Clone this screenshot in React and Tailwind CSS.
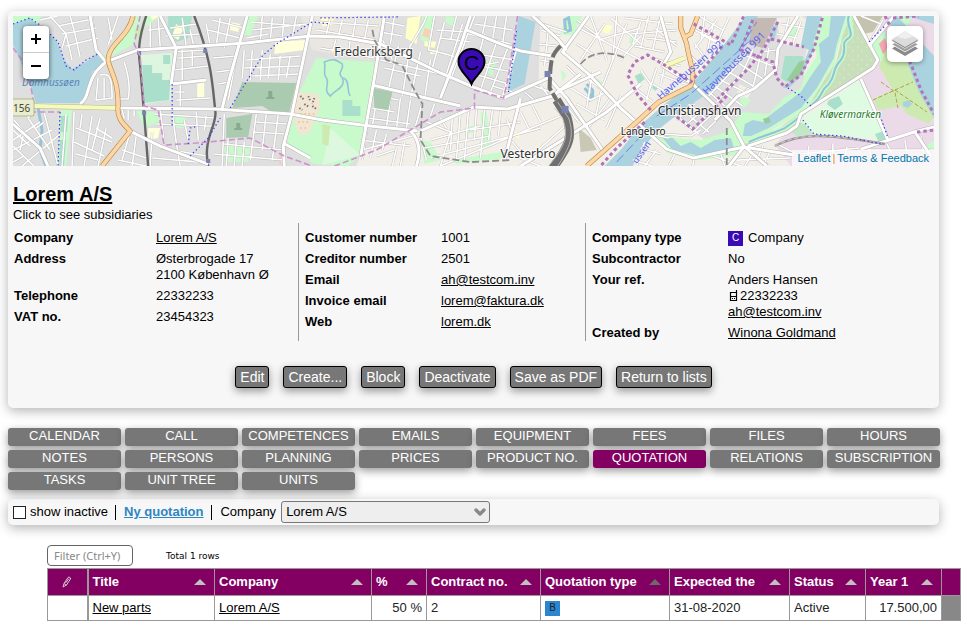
import { useState } from "react"
import { ChevronDown } from "lucide-react"

const TABS = [
    "CALENDAR", "CALL", "COMPETENCES", "EMAILS", "EQUIPMENT", "FEES", "FILES", "HOURS",
    "NOTES", "PERSONS", "PLANNING", "PRICES", "PRODUCT NO.", "QUOTATION", "RELATIONS", "SUBSCRIPTION",
    "TASKS", "UNIT TREE", "UNITS"
]

const ACTIONS = ["Edit", "Create...", "Block", "Deactivate", "Save as PDF", "Return to lists"]

const COLUMNS = [
    { name: "Title",          col: "w-[127px]" },
    { name: "Company",        col: "w-[157px]" },
    { name: "%",              col: "w-[55px]" },
    { name: "Contract no.",   col: "w-[114px]" },
    { name: "Quotation type", col: "w-[129px]", dark: true },
    { name: "Expected the",   col: "w-[120px]" },
    { name: "Status",         col: "w-[76px]" },
    { name: "Year 1",         col: "w-[76px]" }
]

// Side streets, only the white centre line
const STREETS = [
    "M50 16 L66 34 L62 48 M40 20 L58 16 M58 26 L92 19 M62 34 L96 28 M66 46 L98 38 M72 60 L66 34 M80 57 L74 30 L70 16 M92 16 L96 52",
    "M100 75 C110 72 112 78 112 98 L96 100 L98 78 M124 62 C130 80 130 90 128 99 L119 99 M104 78 L104 98 M108 18 L112 40 M118 16 L108 45",
    "M13 140 L40 122 M13 150 L52 130 M22 166 L60 134 M34 166 L13 146 M28 118 L50 150 M44 112 L58 166 M13 130 L30 146",
    "M66 114 L62 166 M74 112 L72 166 M76 128 L112 142 M74 142 L104 156 M82 114 L80 128 M92 116 L84 166 M100 118 L92 150 M106 128 L98 166 M112 138 L96 128 M76 154 L98 160",
    "M122 110 L124 118 M128 109 L128 120 M134 109 L134 116 M130 132 L122 160 M136 136 L132 166 M122 150 L146 158 M118 160 L146 166 M152 132 L150 166",
    "M150 22 L150 48 M158 18 L160 47 M170 28 L196 24 M166 36 L200 34 M182 18 L186 46 M190 30 L193 44 M148 30 L166 28",
    "M172 52 L206 50 M178 58 L206 56 M182 50 L182 80 M192 50 L192 66 M174 70 L208 66 M180 84 L180 106 M176 100 L210 98 M174 92 L184 92",
    "M154 114 L214 118 M160 110 L164 142 M172 112 L176 142 M184 120 L188 140 M196 112 L198 140 M206 116 L204 130 M156 124 L212 126 M160 148 L206 156 M176 142 L180 166 M152 158 L200 162",
    "M212 20 L244 28 M208 30 L240 38 M206 24 L210 46 M220 18 L216 46 M230 18 L224 48 M213 58 L236 56 M216 72 L232 70 M218 84 L229 82 M238 46 L228 100",
    "M250 22 L300 26 M252 30 L306 24 M262 16 L260 42 M272 18 L270 41 M284 16 L282 38 M296 16 L292 38 M246 38 L268 34",
    "M244 50 L242 78 M252 50 L250 80 M246 60 L300 56 M244 68 L300 66 M252 76 L298 74 M262 50 L260 80 M270 54 L268 78 M280 56 L278 80 M290 56 L286 78",
    "M224 114 L222 166 M256 114 L250 160 M266 114 L262 150 M278 114 L272 160 M256 122 L286 124 M254 132 L284 134 M224 144 L284 150 M228 138 L226 166 M236 140 L234 166 M244 142 L242 166 M214 154 L284 160",
    "M318 22 L378 26 M316 30 L376 40 M330 18 L326 34 M342 20 L338 36 M356 16 L352 38 M368 20 L364 40 M320 48 L374 58 M336 38 L332 52 M350 40 L348 54",
    "M384 22 L404 26 M380 32 L402 36 M382 40 L392 60 M398 46 L386 98 M384 68 L420 76 M380 60 L440 74 M394 16 L390 44 M410 44 L402 96 M420 52 L410 98 M430 60 L424 100",
    "M410 46 L424 22 L426 16 M434 16 L428 50 L446 54 M444 22 L432 68 M436 30 L466 32 M440 38 L470 42 M456 16 L450 40 M462 24 L446 74 M430 50 L460 58",
    "M464 44 L440 98 M474 16 L450 80 M484 34 L470 86 M496 42 L480 90 M508 46 L490 92 M516 50 L502 96 M470 64 L512 72 M476 54 L514 60 M474 74 L508 84",
    "M486 16 L482 34 M496 16 L492 40 M506 16 L502 44 M474 24 L512 30 M468 34 L510 44 M480 66 L498 62 M492 86 L512 92",
    "M370 94 L398 100 M372 108 L394 112 M378 88 L372 126 M390 98 L386 128 M368 118 L410 124 M400 98 L396 130 M410 100 L406 128 M422 102 L414 130 M434 104 L430 116",
    "M366 132 L362 160 M376 130 L370 158 M386 134 L382 150 M360 140 L410 146 M362 150 L412 136 M396 148 L392 166 M404 142 L400 166 M376 156 L394 150",
    "M420 136 L426 160 M426 122 L450 132 L440 166 M440 118 L446 128 M452 114 L450 150 M460 110 L456 160 M468 110 L464 160 M476 108 L474 140 M484 110 L480 158 M492 110 L488 140 M500 110 L498 136",
    "M430 158 L540 128 M440 166 L560 116 M424 148 L490 136 M470 130 L520 122 M430 140 L480 126 M500 150 L540 166 M510 140 L524 156 M506 118 L512 134 M520 112 L528 128 M532 106 L540 122 M520 166 L564 126",
    "M540 30 L560 36 M538 44 L556 46 M540 60 L550 62 M528 84 L550 92 M524 92 L536 102 M540 86 L548 96 M548 26 L544 66 M542 24 L566 32",
    "M576 20 L600 38 M590 16 L606 60 M604 24 L580 60 M576 44 L598 58 M610 18 L640 44 M598 40 L640 28 M616 16 L612 60 M626 24 L602 86 M640 36 L620 60 M578 28 L640 60",
    "M566 66 L582 82 M570 88 L590 100 L606 92 M586 78 L610 96 M592 72 L586 108 M602 84 L594 122 M610 98 L586 130 M576 104 L604 120 M620 96 L606 128 M566 106 L578 122",
    "M624 18 L672 24 M630 34 L676 30 M634 46 L664 52 M648 16 L640 48 M654 28 L676 46 M660 16 L652 50 M646 38 L676 42 M640 22 L632 44 M650 58 L680 66 M658 74 L684 84",
    "M698 16 L722 30 M704 16 L700 42 M716 20 L694 48 M690 28 L718 42 M694 44 L706 60 M700 34 L722 46 M712 26 L706 54 M728 18 L716 44 M690 56 L700 66",
    "M640 70 L650 84 L646 100 M652 84 L672 96 M656 68 L648 92 M664 66 L660 84 M634 88 L652 102",
    "M672 112 L698 134 M680 108 L708 132 M688 104 L704 118 M676 120 L694 104 M684 126 L702 110 M692 132 L714 112 M702 134 L722 114",
    "M708 92 L736 116 M714 86 L742 106 M708 96 L736 66 M716 102 L744 70 M724 108 L748 88 M720 80 L744 92 M728 72 L756 88 M736 62 L764 80 M746 56 L772 66 M752 50 L742 72 M760 54 L752 88",
    "M760 52 L776 50 M768 48 L764 76 M776 34 L796 38 M780 24 L802 28 M788 18 L782 44 M800 22 L792 44",
    "M662 134 L690 136 L700 130 M648 134 L668 138 M640 148 L660 154 M632 160 L652 166 M644 142 L636 166 M656 150 L644 166 M674 154 L668 166",
    "M693 160 L692 166 M712 156 L740 166 M720 154 L724 166 M748 148 L768 166 M754 150 L744 166 M762 146 L756 160 M770 150 L762 166 M736 160 L790 158 M776 144 L796 154",
    "M808 146 L806 166 M832 144 L832 166 M846 147 L842 166 M868 148 L872 166 M800 154 L858 148 M886 144 L898 166 M904 140 L908 166 M862 150 L933 150 M920 136 L924 160",
    "M860 16 L880 24 M882 20 L868 44 M13 162 L24 156 M14 120 L24 132 L20 150 M36 128 L44 122"
]

const MAIN_ROADS = [
    "M90 16 L96 50 L106 62",
    "M80 104 C92 96 84 78 106 62 L138 50 L200 46 L246 43 L310 36 L340 37 L380 44 L440 73 L470 86 L503 98 L550 77",
    "M118 108 L215 109 L290 114 L322 120 L370 126 L417 131",
    "M247 16 L230 76 L222 108 M160 16 L176 48 L171 84 L206 80",
    "M312 16 L292 112 L283 146 L284 166 M283 143 L310 158",
    "M13 124 L40 148 L48 166 M34 106 L28 118",
    "M130 131 L160 146 L208 164",
    "M384 16 L374 78 L360 158 M372 85 L430 99 L460 106",
    "M420 131 L473 107 L507 109 L552 96 L580 74 M410 131 C420 140 420 154 416 166",
    "M466 30 L500 44 L520 51 L552 56 M470 16 L460 46 L440 98 M520 98 L504 160",
    "M532 16 L558 40 L566 50 M588 16 L562 52 L590 76 L620 108 L666 149 L693 158 L743 147 L793 155",
    "M548 78 L566 98 L602 150 M552 96 L560 90 L600 72",
    "M520 166 L546 150 L606 112 L640 84",
    "M660 16 L670 52 L662 66 L692 84 L730 121 L743 146 L766 166 M743 147 L728 166",
    "M797 16 L777 49 L775 70 L753 89 L737 96 L714 120",
    "M853 16 L877 60 L872 68 L800 114 L796 126 L786 133 L747 146",
    "M860 79 L887 140 M893 16 L868 46 M860 149 L913 132 L933 127 M914 132 L930 156"
]

const ORANGE_ROADS = [
    "M133 16 C128 38 108 44 108 60 C110 72 118 78 118 106 C116 120 126 126 130 131 L102 166",
    "M586 166 L636 122 L658 102 L690 86 C696 76 688 60 686 44 L680 28 L680 16 M683 38 L690 34 L697 16"
]

const BOUNDARIES = [
    "M13 48 L22 60 L30 82 L34 104 M30 112 L60 112",
    "M140 16 L134 44 L140 56 L144 106 L158 110 L164 145 L196 143 L250 138 L284 156 L312 166",
    "M334 166 L376 150 L420 124 L440 112 L474 108 L474 90 L503 98 L508 76 L517 16"
]

const BROAD_BOUNDARIES = [
    "M650 110 L637 95 L627 75 L634 62 L647 55 L670 69 L690 82 L722 46",
    "M693 24 L730 45 L743 16",
    "M777 22 L763 49 L747 69 L717 99 M726 96 L692 129 L675 116",
    "M752 20 L740 50 L772 62 L776 78 L784 87 L800 75 L813 49 L822 16 M770 39 L803 47",
    "M884 16 L896 40 L910 64 L920 90 L933 114 M892 18 L918 16",
    "M644 122 L614 150 L600 166 M916 132 L933 130"
]

const RAILWAYS = [
    "M146 16 C138 40 138 52 140 66 L144 114 L148 166",
    "M194 16 C212 62 212 84 215 110 C218 124 202 138 208 166"
]

const FOOTPATHS = [
    "M13 24 L30 18 L44 28 L58 42 L66 66 L74 70 L86 60 L98 54",
    "M60 112 L58 166 M172 84 L172 128 M190 156 L208 138 L220 118 M188 144 L190 128 L198 126",
    "M230 108 L262 56 L276 44 L312 22 L330 24 M320 18 L400 17 M508 92 L516 30",
    "M787 88 L800 96 L811 107 M802 120 L813 134 L842 136 L880 144 M868 42 L884 26 M878 112 L887 138"
]

function CityMap() {
    return (
        <svg
            viewBox="13 16 920 150"
            preserveAspectRatio="xMidYMid slice"
            className="block h-full w-full"
            aria-label="Map of Copenhagen"
            role="img"
        >
            <defs>
                <pattern id="trees" width="9" height="9" patternUnits="userSpaceOnUse">
                    <circle cx="2" cy="2" r="0.8" fill="#e8e8c8" />
                    <circle cx="6" cy="6" r="0.8" fill="#e8e8c8" />
                </pattern>
            </defs>

            {/* Land */}
            <rect x="13" y="16" width="920" height="150" fill="#dfdfdf" />
            <path d="M13 16 L42 16 L34 28 L13 24 Z M144 16 L160 16 L146 28 Z M134 16 L142 16 L134 44 L108 58 L104 54 L122 38 Z" fill="#c8facc" />
            <path d="M540 16 H933 V166 H356 L362 150 L416 132 L473 108 L507 110 L552 96 L538 84 Z" fill="#f2efe9" />
            <path d="M300 16 L384 16 L370 60 L312 50 Z" fill="#eae7e3" />

            {/* Parks and green areas */}
            <path d="M316 58 L374 62 L372 80 L360 155 L348 166 L314 164 L286 146 L292 118 L300 90 Z" fill="#c8facc" />
            <path d="M330 128 L360 155 L322 165 Z" fill="#ddf8df" />
            <path d="M140 55 L172 53 L171 100 L144 104 Z" fill="#def6df" />
            <path d="M142 65 L152 65 L152 73 L162 73 L162 80 L170 80 L169 100 L144 103 Z M163 55 L170 55 L170 64 L163 64 Z" fill="#aae0cb" />
            <path d="M168 16 L192 16 L188 38 L176 42 L168 28 Z" fill="#aae0cb" />
            <path d="M176 24 L184 28 L178 40 L172 36 Z M150 16 L160 16 L152 20 Z M275 42 L305 40 L304 50 L274 54 Z M230 22 L240 24 L238 32 L230 30 Z M197 84 L204 82 L204 98 L197 98 Z M148 128 L160 128 L158 138 L148 140 Z" fill="#ffffdc" />
            <path d="M249 16 L258 16 L250 36 L243 34 Z M61 110 L72 110 L66 166 L58 166 Z M172 114 L186 116 L184 128 L174 128 Z M224 146 L250 146 L248 162 L226 162 Z M136 110 L158 112 L160 122 L144 128 Z" fill="#c8facc" />
            <path d="M61 116 L68 116 L67 132 L60 132 Z M60 140 L66 140 L64 166 L59 166 Z" fill="#aae0cb" />
            <path d="M298 92 L318 94 L320 106 L316 116 L310 132 L300 136 L294 122 L292 114 Z" fill="#f1e5d3" />
            <path d="M300 96 l4 4 M308 96 l2 5 M314 98 l-2 6 M304 104 l5 3 M312 106 l4 3 M299 108 l3 2" stroke="#777" strokeWidth="2" strokeDasharray="1.5 1.5" />
            <path d="M298 122 h12 M300 128 h8 M300 114 h14" stroke="#f3c186" strokeWidth="2" strokeDasharray="1.2 3" />
            <path d="M407 18 L420 16 L416 44 L405 38 Z M424 40 L436 42 L434 48 L424 46 Z M429 50 L440 52 L438 54 L430 54 Z M320 18 L334 18 L330 26 L322 26 Z M602 24 L612 26 L608 34 L602 32 Z M514 132 L520 134 L518 138 L513 136 Z" fill="#ffffc8" />
            <path d="M422 16 L434 16 L428 42 L420 40 Z" fill="#c8facc" />
            <path d="M424 28 L430 30 L428 38 L422 36 Z" fill="#facfb6" />
            <path d="M566 16 L582 16 L572 36 L560 34 Z M446 16 L458 18 L452 26 L444 22 Z M484 62 L496 60 L492 76 L486 72 Z M420 140 L430 142 L440 160 L424 164 Z M480 112 L486 112 L492 146 L482 150 Z M452 160 L500 152 L504 158 L456 164 Z M630 36 L636 38 L632 46 L628 42 Z M596 78 L602 82 L596 90 Z M560 70 L566 74 L562 82 Z M464 128 L478 124 L476 132 L466 134 Z" fill="#c8facc" />
            <path d="M342 100 h10 v6 h8 v10 h-18 z M634 76 l6 -3 l4 6 l-6 5 z M654 84 l4 3 l-3 4 l-4 -3 z" fill="#aae0cb" />
            <path d="M322 124 L330 126 L328 146 L322 144 Z M134 30 L144 26 L140 42 Z" fill="#cdebb0" />
            <path d="M578 128 L590 138 L596 150 L580 152 Z" fill="#c8c8b4" />
            <path d="M278 158 L284 148 L280 166 Z" fill="#f6c6c0" />

            {/* Christianshavn and Amager */}
            <path d="M757 16 H812 L802 70 L806 90 L776 116 L740 136 L704 140 L672 116 L707 92 L737 58 Z" fill="#dfdfdf" />
            <path d="M776 18 L800 16 L808 20 L800 46 L780 44 Z M738 84 L752 90 L746 100 L736 96 Z M668 122 L682 134 L664 136 L656 130 Z" fill="#f2efe9" />
            <path d="M742 96 l8 4 l-6 8 l-6 -4 z M786 24 l12 4 l-4 12 l-10 -4 z" fill="#c8facc" />
            <path d="M846 16 L853 16 L877 60 L872 68 L800 114 L796 126 L784 134 L748 146 L733 148 L770 134 L806 108 L836 60 Z" fill="#c8dfbb" />
            <path d="M846 16 L853 16 L877 60 L868 68 L826 92 L838 60 Z" fill="url(#trees)" />
            <path d="M853 16 L882 16 L872 32 L862 34 Z" fill="#c5c3ae" />
            <path d="M884 16 L933 16 V136 L888 142 L860 80 L876 62 L868 44 Z M774 144 L790 130 L814 134 L842 138 L888 142 L933 130 V166 H790 Z" fill="#ebdbe8" />
            <path d="M800 120 L858 80 L887 139 L842 136 L813 134 Z" fill="#dffce2" />
            <path d="M828 100 L838 96 L842 104 L834 110 L826 104 Z M874 134 L886 130 L888 140 L878 142 Z" fill="#aae0cb" />
            <path d="M798 122 L804 124 L812 134 L796 136 L790 132 Z" fill="#c0e8c4" />
            <path d="M868 44 L884 32 L888 44 L884 60 L876 62 Z M893 16 L912 16 L906 26 L892 30 Z M933 140 L933 150 L918 152 Z" fill="#c8facc" />
            <path d="M878 44 l6 -6 l4 12 l-6 4 z" fill="#f7a7b4" />
            <path d="M886 48 L908 62 L920 92 L933 116 L928 124 L906 114 L900 106 L878 110 L872 99 L892 90 L878 66 Z" fill="#cdebb0" />
            <path d="M872 100 L894 90 L912 82 M880 82 L894 92 L897 108 M894 90 L926 112" fill="none" stroke="#b0953c" strokeWidth="0.9" strokeDasharray="4 2" />

            {/* Water */}
            <path d="M13 24 L30 18 L42 28 L56 40 L64 60 L72 69 L86 62 L96 54 L104 62 L92 72 L90 88 L82 103 L36 103 L30 84 L13 44 Z" fill="#aad3df" />
            <path d="M745 16 H757 L752 34 L737 58 L707 93 L680 112 L657 130 L637 155 L632 166 H604 L620 150 L640 125 L663 105 L693 82 L720 49 Z" fill="#aad3df" />
            <path d="M753 18 L776 18 L762 48 L748 44 Z" fill="#c5b9b4" />
            <path d="M806 16 H821 L814 48 L802 74 L788 88 L782 88 L800 70 L808 50 L800 46 Z M770 28 l8 -6 l-4 16 l-6 6 z" fill="#aad3df" />
            <path d="M821 16 H850 L838 44 L834 62 L816 92 L802 112 L768 132 L746 142 L733 156 L700 160 L668 154 L652 138 L660 132 L676 138 L700 140 L726 132 L742 112 L768 114 L783 98 L800 88 L804 74 L816 56 L812 44 Z" fill="#c8facc" />
            <path d="M830 16 H845 L836 44 L833 58 L816 88 L800 108 L768 128 L750 136 L742 136 L744 124 L752 120 L762 122 L768 116 L784 104 L800 92 L810 76 L820 62 L818 44 L828 36 Z" fill="#aad3df" />
            <path d="M662 138 L672 138 L680 146 L690 142 L700 148 L714 140 L730 138 L734 150 L700 156 L672 150 Z" fill="#aad3df" />
            <path d="M762 119 l6 -2 l2 5 l-5 2 z" fill="#98cb98" />
            <path d="M850 16 C846 24 854 34 848 38 C838 44 848 48 840 60 C830 70 836 74 828 84 C818 92 824 94 812 104 C800 116 796 120 784 128 C766 136 760 136 748 142" fill="none" stroke="#c8facc" strokeWidth="5" />
            <path d="M848 16 C844 24 854 34 848 38 C838 44 848 48 840 60 C830 70 836 74 828 84 C818 92 824 94 812 104 C800 116 796 120 784 128 C766 136 760 136 748 142" fill="none" stroke="#8fc4d8" strokeWidth="2" />
            <path d="M784 56 L802 56 L803 66 L796 78 L786 82 L780 78 Z" fill="#aae0cb" />
            <path d="M798 62 L804 60 L800 74 L790 82 L786 80 Z" fill="#98cb98" />
            <path d="M518 16 L535 22 L524 84 L507 92 Z M906 16 L933 16 V24 Z M886 18 L896 16 L933 56 V118 L918 92 L906 62 Z M902 102 l6 -2 l3 4 l-4 4 l-5 -2 z" fill="#aad3df" />
            <path d="M324 62 C334 58 336 60 342 64 C344 70 336 72 342 78 C346 88 334 90 330 96 C322 90 330 84 326 78 C322 74 326 68 324 62 Z M343 78 C350 80 346 92 350 96" fill="none" stroke="#95c4d8" strokeWidth="1.6" />
            <path d="M38 108 L42 130 L40 150 L46 166 M564 20 l4 -2 l2 12 l-5 2 z M586 84 l6 6 l0 8 l-3 2 l0 -6 l-5 -6" fill="none" stroke="#95c4d8" strokeWidth="3" />

            {/* Roads */}
            {STREETS.map(d => (
                <path key={d} d={d} fill="none" stroke="#bcbab8" strokeWidth="2.4" />
            ))}
            {STREETS.map(d => (
                <path key={d} d={d} fill="none" stroke="#fff" strokeWidth="1.6" />
            ))}

            {/* Cemeteries */}
            <path d="M242 82 L296 83 L289 112 L270 111 L262 106 L232 108 Z M226 118 L252 114 L248 137 L226 138 Z M373 88 L392 92 L388 110 L374 108 Z" fill="#aacbaf" />
            <path d="M266 99 h8 v-2 h-2 v-6 h-4 v6 h-2 z M234 130 h8 v-2 h-2 v-5 h-4 v5 h-2 z" fill="#8aaa8e" />

            {RAILWAYS.map(d => (
                <path key={d} d={d} fill="none" stroke="#666" strokeWidth="2.4" />
            ))}
            {MAIN_ROADS.map(d => (
                <path key={d} d={d} fill="none" stroke="#b4b2b0" strokeWidth="4" strokeLinejoin="round" />
            ))}
            {MAIN_ROADS.map(d => (
                <path key={d} d={d} fill="none" stroke="#fff" strokeWidth="3" strokeLinejoin="round" />
            ))}
            <path d="M34 106 L118 108 M664 66 L684 58" fill="none" stroke="#b9bd72" strokeWidth="5" />
            <path d="M34 106 L118 108 M664 66 L684 58" fill="none" stroke="#f7fabf" strokeWidth="4" />
            {ORANGE_ROADS.map(d => (
                <path key={d} d={d} fill="none" stroke="#b8843c" strokeWidth="5" strokeLinejoin="round" />
            ))}
            {ORANGE_ROADS.map(d => (
                <path key={d} d={d} fill="none" stroke="#fcd6a4" strokeWidth="3.8" strokeLinejoin="round" />
            ))}

            {/* Main line into the central station */}
            <path d="M560 46 C550 56 550 60 549 88 L556 100" fill="none" stroke="#707070" strokeWidth="4" strokeDasharray="14 3" />
            <path d="M556 100 L566 116 C572 136 570 144 552 168" fill="none" stroke="#707070" strokeWidth="9" />
            <path d="M557 102 L568 118 C574 136 570 146 556 168 M554 108 L562 118 C568 136 566 144 548 166" fill="none" stroke="#c4c4c4" strokeWidth="0.8" />
            <path d="M372 30 L374 40 L386 60 L398 64 M402 66 L414 90 L422 104 L420 140 L430 156 L470 162 L510 160 M580 64 C590 52 606 50 624 58 M726 128 L726 166" fill="none" stroke="#8c8c8c" strokeWidth="1.8" strokeDasharray="7 3" />
            <path d="M774 146 C800 132 826 134 884 144" fill="none" stroke="#999" strokeWidth="2.4" />
            <path d="M774 146 C800 132 826 134 884 144" fill="none" stroke="#ddd" strokeWidth="0.8" strokeDasharray="4 3" />
            <path d="M137 51 h4 v4 h-4 z M203 49 h4 v4 h-4 z M142 111 h4 v4 h-4 z M206 159 h4 v4 h-4 z M544 71 h6 v6 h-6 z M561 106 h7 v7 h-7 z" fill="#7a82b4" />

            {BOUNDARIES.map(d => (
                <path key={d} d={d} fill="none" stroke="#cc92cc" strokeWidth="1.6" strokeDasharray="6 3" />
            ))}
            {BROAD_BOUNDARIES.map(d => (
                <path key={d} d={d} fill="none" stroke="#b273b8" strokeWidth="3" strokeDasharray="3.4 3" />
            ))}
            {FOOTPATHS.map(d => (
                <path key={d} d={d} fill="none" stroke="#3a3af0" strokeWidth="1.2" strokeDasharray="1.4 2.6" />
            ))}
            <path d="M738 50 L756 22 M656 116 L690 94 L750 40 M616 162 L644 132" fill="none" stroke="#5a6df0" strokeWidth="0.8" strokeDasharray="10 4" />

            {/* Labels */}
            <rect x="8" y="99" width="26" height="17" rx="2" fill="#e9ecd2" stroke="#b5ba85" />
            <g className="font-['Noto_Sans']" stroke="#fff" strokeOpacity="0.75" strokeWidth="2" paintOrder="stroke">
                <text x="13" y="112" fontSize="10" fill="#444a25" stroke="none">156</text>
                <text x="22" y="86" fontSize="10" fontStyle="italic" fill="#5a86b8" stroke="none">Damhussøen</text>
                <text x="334" y="56" fontSize="12" fill="#333">Frederiksberg</text>
                <text x="500" y="158" fontSize="12" fill="#333">Vesterbro</text>
                <text x="657" y="115" fontSize="12" fill="#222">Christianshavn</text>
                <text x="620" y="135" fontSize="10" fill="#222">Langebro</text>
                <text x="819" y="118" fontSize="10" fontStyle="italic" fill="#1f7a2e">Kløvermarken</text>
                <text x="660" y="100" fontSize="10" fill="#5260f2" stroke="none" transform="rotate(-41 660 100)">Havnebussen 992</text>
                <text x="706" y="95" fontSize="10" fill="#5260f2" stroke="none" transform="rotate(-45 706 95)">Havnebussen 991</text>
                <text x="636" y="164" fontSize="9" fill="#5260f2" stroke="none" transform="rotate(-54 636 164)">ussen</text>
            </g>

            {/* Company marker */}
            <path d="M471 84 C468 76 458 71 458 62 A13 13 0 1 1 484 62 C484 71 474 76 471 84 Z" fill="#3a0ab5" stroke="#000" strokeWidth="2" />
            <text x="471" y="70" fontSize="21" textAnchor="middle" className="font-['Liberation_Sans']">C</text>
        </svg>
    )
}

function LayersIcon() {
    return (
        <svg viewBox="0 0 26 26" className="h-[26px] w-[26px]">
            <path d="M0 17.5 L13 25 L26 17.5 L23 15.5 L13 21 L3 15.5 Z" fill="#8a8a8a" />
            <path d="M0 13.5 L13 21 L26 13.5 L23 11.5 L13 17 L3 11.5 Z" fill="#a0a0a0" stroke="#fff" strokeWidth="0.6" />
            <path d="M0 8.5 L13 0.5 L26 8.5 V10 L13 17.5 L0 10 Z" fill="#8a8a8a" stroke="#fff" strokeWidth="0.5" />
            <path d="M0 8.5 L13 0.5 L26 8.5 L13 16 Z" fill="#dcdcdc" />
            <path d="M5 5.5 L13 0.5 L21 5.5 L13 8 Z" fill="#efefef" />
        </svg>
    )
}

function MapPanel() {
    return (
        <div className="relative h-[150px] overflow-hidden">
            <CityMap />
            <div className="absolute left-[10px] top-[10px] flex w-[26px] flex-col rounded bg-white shadow-[0_1px_5px_rgba(0,0,0,0.65)]">
                <button type="button" aria-label="Zoom in" className="flex h-[27px] items-center justify-center border-b border-[#ccc]">
                    <svg viewBox="0 0 12 12" className="h-3 w-3"><path d="M6 1 V11 M1 6 H11" stroke="#000" strokeWidth="2" /></svg>
                </button>
                <button type="button" aria-label="Zoom out" className="flex h-[26px] items-center justify-center">
                    <svg viewBox="0 0 12 12" className="h-3 w-3"><path d="M1 6 H11" stroke="#000" strokeWidth="2" /></svg>
                </button>
            </div>
            <button
                type="button"
                aria-label="Layers"
                className="absolute right-[11px] top-[10px] flex h-9 w-9 items-center justify-center rounded-[5px] bg-white shadow-[0_1px_5px_rgba(0,0,0,0.4)]"
            >
                <LayersIcon />
            </button>
            <div className="absolute bottom-0 right-0 flex gap-[2px] bg-white/70 px-[5px] text-[11px] leading-4 text-[#0078a8]">
                <a href="#leaflet">Leaflet</a>
                <span className="text-[#e08a3c]">|</span>
                <a href="#terms">Terms &amp; Feedback</a>
            </div>
        </div>
    )
}

function Row({ label, children }) {
    return (
        <div className="mb-[5px] flex">
            <dt className="w-[136px] shrink-0 font-bold">{label}</dt>
            <dd>{children}</dd>
        </div>
    )
}

function CompanyInfo() {
    return (
        <div className="flex h-[118px]">
            <dl className="w-[285px] shrink-0 pl-px pt-[7px]">
                <div className="mb-[5px] flex">
                    <dt className="w-[142px] font-bold">Company</dt>
                    <dd><a href="#company" className="underline">Lorem A/S</a></dd>
                </div>
                <div className="mb-[5px] flex">
                    <dt className="w-[142px] font-bold">Address</dt>
                    <dd>Østerbrogade 17<br />2100 København Ø</dd>
                </div>
                <div className="mb-[5px] flex">
                    <dt className="w-[142px] font-bold">Telephone</dt>
                    <dd>22332233</dd>
                </div>
                <div className="flex">
                    <dt className="w-[142px] font-bold">VAT no.</dt>
                    <dd>23454323</dd>
                </div>
            </dl>

            <dl className="w-[287px] shrink-0 border-l border-[#999] pl-[6px] pt-[7px]">
                <Row label="Customer number">1001</Row>
                <Row label="Creditor number">2501</Row>
                <Row label="Email"><a href="#email" className="underline">ah@testcom.inv</a></Row>
                <Row label="Invoice email"><a href="#invoice" className="underline">lorem@faktura.dk</a></Row>
                <Row label="Web"><a href="#web" className="underline">lorem.dk</a></Row>
            </dl>

            <dl className="grow border-l border-[#999] pl-[6px] pt-[7px]">
                <Row label="Company type">
                    <span className="flex items-center gap-[5px]">
                        <span className="flex h-[15px] w-[15px] items-center justify-center bg-[#3a0ab5] text-[10px] leading-none text-white">C</span>
                        Company
                    </span>
                </Row>
                <Row label="Subcontractor">No</Row>
                <Row label="Your ref.">
                    Anders Hansen
                    <span className="flex items-center">
                        <svg viewBox="0 0 12 12" className="h-3 w-3">
                            <path d="M2.5 2.5 H8.5 V10.5 H2.5 Z M8.5 3 V0 M3 6.5 H8" fill="none" stroke="#000" strokeWidth="1.2" />
                            <path d="M4 8.5 H5 M6 8.5 H7" stroke="#000" />
                        </svg>
                        22332233
                    </span>
                    <a href="#ref" className="underline">ah@testcom.inv</a>
                </Row>
                <Row label="Created by"><a href="#creator" className="underline">Winona Goldmand</a></Row>
            </dl>
        </div>
    )
}

function SortArrow({ dark }) {
    return (
        <svg viewBox="0 0 12 6" className={`mr-1 h-[6px] w-3 shrink-0 ${dark ? "text-[#6a6a6a]" : "text-[#c0c0c0]"}`}>
            <path d="M0 6 L6 0 L12 6 Z" fill="currentColor" />
        </svg>
    )
}

function QuotationTable() {
    return (
        <table className="w-full table-fixed border-collapse border border-[#999] text-[13px] leading-4 text-[#222]">
            <colgroup>
                <col className="w-[40px]" />
                {COLUMNS.map(c => <col key={c.name} className={c.col} />)}
                <col className="w-[19px]" />
            </colgroup>
            <thead>
                <tr className="h-[27px] bg-[#830062] text-left text-white">
                    <th className="border border-r-2 border-[#999]">
                        <svg viewBox="0 0 12 12" className="mx-auto h-3 w-3" aria-label="Edit">
                            <path d="M2 11 L3 7.5 L7 1.5 C8 0.5 10 1.5 9.5 3 L5.5 9 Z M3 7.5 L5.5 9 M4.5 7 L8 2.5" fill="none" stroke="#d8c4d2" strokeWidth="1" />
                        </svg>
                    </th>
                    {COLUMNS.map(c => (
                        <th key={c.name} className="border border-[#999] px-1">
                            <span className="flex items-center justify-between whitespace-nowrap">
                                {c.name}
                                <SortArrow dark={c.dark} />
                            </span>
                        </th>
                    ))}
                    <th className="border border-[#999]"></th>
                </tr>
            </thead>
            <tbody>
                <tr className="h-[25px]">
                    <td className="border border-r-2 border-[#999]"></td>
                    <td className="border border-[#999] px-1"><a href="#quotation" className="text-black underline">New parts</a></td>
                    <td className="border border-[#999] px-1"><a href="#company" className="text-black underline">Lorem A/S</a></td>
                    <td className="border border-[#999] px-1 text-right">50 %</td>
                    <td className="border border-[#999] px-1">2</td>
                    <td className="border border-[#999] px-1">
                        <span className="flex h-[15px] w-[15px] items-center justify-center bg-[#2a86d0] text-[10px] leading-none">B</span>
                    </td>
                    <td className="border border-[#999] px-1">31-08-2020</td>
                    <td className="border border-[#999] px-1">Active</td>
                    <td className="border border-[#999] px-1 text-right">17.500,00</td>
                    <td className="border border-[#999] bg-[#888]"></td>
                </tr>
            </tbody>
        </table>
    )
}

export default function App() {

    const [tab,      setTab]      = useState("QUOTATION")
    const [inactive, setInactive] = useState(false)
    const [filter,   setFilter]   = useState("")

    return (
        <div className="bg-white pb-4 pl-2 pt-[11px] font-['Liberation_Sans',Arial,sans-serif] text-[13px] leading-4 text-black">

            {/* Company card */}
            <section className="mr-[37px] rounded-[5px] bg-[#f7f7f7] px-[5px] pb-5 pt-[5px] shadow-[0_3px_12px_rgba(0,0,0,0.3)]">
                <MapPanel />
                <h1 className="mt-4 text-[20px] font-bold leading-6">
                    <a href="#company" className="underline">Lorem A/S</a>
                </h1>
                <p className="mt-px">Click to see subsidiaries</p>
                <CompanyInfo />
                <div className="mt-[25px] flex justify-center gap-[14px]">
                    {ACTIONS.map(a => (
                        <button
                            key={a}
                            type="button"
                            className="h-[22px] rounded-[3px] border border-black bg-[#777] px-1 text-[14px] leading-5 text-white shadow-[0_3px_8px_rgba(0,0,0,0.4)]"
                        >
                            {a}
                        </button>
                    ))}
                </div>
            </section>

            {/* Tabs */}
            <nav className="mr-9 mt-5 grid grid-cols-8 gap-1">
                {TABS.map(t => (
                    <button
                        key={t}
                        type="button"
                        onClick={() => setTab(t)}
                        className={`flex h-[18px] justify-center rounded-[3px] leading-[15px] text-white shadow-[0_3px_8px_rgba(0,0,0,0.4)] ${
                            tab === t ? "bg-[#830062]" : "bg-[#777]"
                        }`}
                    >
                        {t}
                    </button>
                ))}
            </nav>

            {/* Options */}
            <div className="mr-[37px] mt-[9px] flex h-[26px] items-center rounded-[5px] bg-[#f7f7f7] pl-[5px] shadow-[0_3px_12px_rgba(0,0,0,0.3)]">
                <label className="flex items-center gap-1">
                    <input
                        type="checkbox"
                        checked={inactive}
                        onChange={e => setInactive(e.target.checked)}
                        className="h-[13px] w-[13px] appearance-none border border-[#222] bg-white checked:bg-[#333]"
                    />
                    show inactive
                </label>
                <span className="ml-[7px] mr-2 h-[15px] w-px bg-black"></span>
                <a href="#new" className="font-bold text-[#2e86c1] underline">Ny quotation</a>
                <span className="mx-2 h-[15px] w-px bg-black"></span>
                <label htmlFor="company">Company</label>
                <div className="relative ml-[5px] w-[209px]">
                    <select
                        id="company"
                        className="block h-[22px] w-full appearance-none rounded-[3px] border border-[#777] bg-[#eee] px-1 text-[13px] leading-5"
                    >
                        <option>Lorem A/S</option>
                    </select>
                    <ChevronDown className="pointer-events-none absolute right-[2px] top-[3px] h-4 w-4 text-[#888]" strokeWidth={5} />
                </div>
            </div>

            {/* Quotations */}
            <main className="ml-[39px] mr-4 mt-5">
                <div className="mb-[2px] flex items-center">
                    <input
                        value={filter}
                        onChange={e => setFilter(e.target.value)}
                        placeholder="Filter (Ctrl+Y)"
                        aria-label="Filter"
                        className="h-[21px] w-[86px] rounded border border-[#666] px-[6px] font-['Noto_Sans',sans-serif] text-[11px] placeholder:text-[#888]"
                    />
                    <span className="ml-[33px] font-['DejaVu_Sans',sans-serif] text-[9px]">Total 1 rows</span>
                </div>
                <QuotationTable />
            </main>
        </div>
    )
}
